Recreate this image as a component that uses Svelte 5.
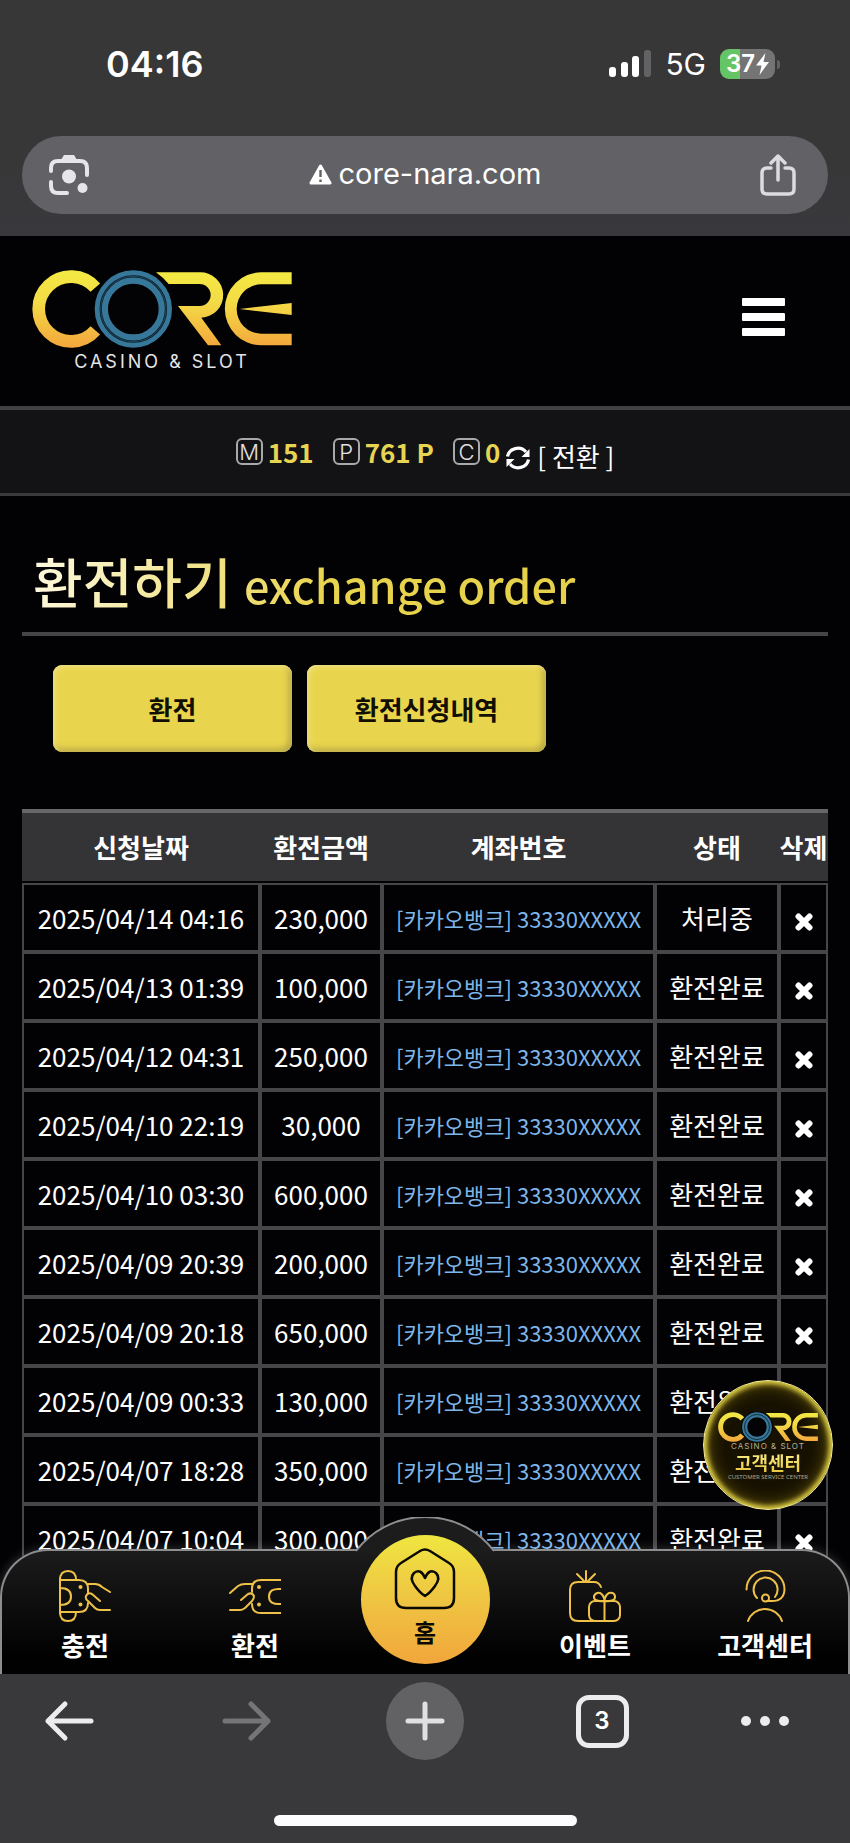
<script>
  const orders = [
    ['2025/04/14 04:16', '230,000', '처리중'],
    ['2025/04/13 01:39', '100,000', '환전완료'],
    ['2025/04/12 04:31', '250,000', '환전완료'],
    ['2025/04/10 22:19', '30,000', '환전완료'],
    ['2025/04/10 03:30', '600,000', '환전완료'],
    ['2025/04/09 20:39', '200,000', '환전완료'],
    ['2025/04/09 20:18', '650,000', '환전완료'],
    ['2025/04/09 00:33', '130,000', '환전완료'],
    ['2025/04/07 18:28', '350,000', '환전완료'],
    ['2025/04/07 10:04', '300,000', '환전완료']
  ];
  const account = '[카카오뱅크] 33330XXXXX';
</script>

{#snippet mark()}
  <svg class="mark" viewBox="97 104 780 234" aria-hidden="true">
    <defs>
      <linearGradient id="gold" gradientUnits="userSpaceOnUse" x1="0" y1="104" x2="0" y2="338">
        <stop offset="0" stop-color="#f3ea43" />
        <stop offset="0.4" stop-color="#f3dc46" />
        <stop offset="1" stop-color="#f3a63c" />
      </linearGradient>
    </defs>
    <path d="M287 157A97 97 0 1 0 287 285" fill="none" stroke="url(#gold)" stroke-width="38" />
    <path d="M469 111H600A68 68 0 0 1 605 247L665 330H625L535 212H600A33 33 0 0 0 600 146H507Q490 126 469 111Z" fill="url(#gold)" />
    <path d="M876 111H785A109 109 0 0 0 785 330H876V295H785A74 74 0 0 1 785 147H876Z" fill="url(#gold)" />
    <path d="M720 221L876 203V239Z" fill="url(#gold)" />
    <circle cx="401" cy="221" r="122" fill="#030204" />
    <circle cx="401" cy="221" r="96" fill="none" stroke="#37789a" stroke-width="40" />
    <circle cx="401" cy="221" r="98" fill="none" stroke="#0b1e29" stroke-width="7" />
    <circle cx="401" cy="221" r="98" fill="none" stroke="#2a5d78" stroke-width="2" />
  </svg>
{/snippet}

<div class="screen">
  <header class="chrome-top">
    <div class="status">
      <span class="clock">04:16</span>
      <div class="signals">
        <svg width="42" height="28" viewBox="0 0 42 28" aria-hidden="true">
          <rect x="0" y="17" width="7" height="10" rx="3" fill="#fff" />
          <rect x="12" y="12" width="7" height="15" rx="3" fill="#fff" />
          <rect x="23" y="6" width="7" height="21" rx="3" fill="#fff" />
          <rect x="35" y="0" width="7" height="27" rx="3" fill="#626264" />
        </svg>
        <span class="net">5G</span>
        <div class="battery">
          <span>37</span>
          <svg width="13" height="22" viewBox="0 0 13 22" aria-hidden="true"><path d="M9.500 0L0 12.500H5.500L3.500 22L13 9H7.500Z" fill="#fff" /></svg>
        </div>
      </div>
    </div>
    <div class="address">
      <button aria-label="Lens">
        <svg width="42" height="42" viewBox="0 0 42 42" fill="none" stroke="#e6e5ea" stroke-width="4" stroke-linecap="round">
          <path d="M3 17V14Q3 7 10 7H32Q39 7 39 14V21M3 28V32Q3 39 10 39H19" />
          <path d="M13 6L16 1H26L29 6Z" fill="#e6e5ea" stroke="none" />
          <circle cx="21" cy="22.500" r="7" fill="#e6e5ea" stroke="none" />
          <circle cx="34.500" cy="34" r="5" fill="#e6e5ea" stroke="none" />
        </svg>
      </button>
      <div class="url">
        <svg width="23" height="21" viewBox="0 0 23 21" aria-hidden="true"><path d="M11.500 2L21 19H2Z" fill="#fff" stroke="#fff" stroke-width="3" stroke-linejoin="round" /><path d="M11.500 6V13M11.500 15.500V18" stroke="#626166" stroke-width="2.400" /></svg>
        <span>core-nara.com</span>
      </div>
      <button aria-label="Share">
        <svg width="36" height="42" viewBox="0 0 36 42" fill="none" stroke="#dcdbe0" stroke-width="3.500" stroke-linecap="round" stroke-linejoin="round">
          <path d="M11 14H7Q2 14 2 19V35Q2 40 7 40H29Q34 40 34 35V19Q34 14 29 14H25M18 26V2M11 9L18 2L25 9" />
        </svg>
      </button>
    </div>
  </header>

  <div class="site">
    <div class="brand-bar">
      <a class="logo" href="#home" aria-label="CORE">
        {@render mark()}
        <span>CASINO &amp; SLOT</span>
      </a>
      <button class="menu" aria-label="메뉴"><i></i><i></i><i></i></button>
    </div>

    <div class="points">
      <span class="point"><b class="tag">M</b><strong>151</strong></span>
      <span class="point"><b class="tag">P</b><strong>761 P</strong></span>
      <span class="point"><b class="tag">C</b><strong>0</strong></span>
      <button class="convert">
        <svg width="24" height="28" viewBox="0 -4 24 28" aria-hidden="true">
          <path d="M1.500 10.500A10.500 10 0 0 1 20 6M22.500 13.500A10.500 10 0 0 1 4 18" fill="none" stroke="#fff" stroke-width="3.200" />
          <path d="M23.500 3V11H15.500ZM0.500 21V13H8.500Z" fill="#fff" />
        </svg>
        <span>[ 전환 ]</span>
      </button>
    </div>

    <main>
      <h1>환전하기 <small>exchange order</small></h1>
      <div class="tabs">
        <button>환전</button>
        <button>환전신청내역</button>
      </div>
      <table>
        <colgroup><col class="c-date" /><col class="c-sum" /><col class="c-acc" /><col class="c-state" /><col class="c-del" /></colgroup>
        <thead>
          <tr><th>신청날짜</th><th>환전금액</th><th>계좌번호</th><th>상태</th><th>삭제</th></tr>
        </thead>
        <tbody>
          {#each orders as [date, sum, state]}
            <tr>
              <td>{date}</td>
              <td>{sum}</td>
              <td class="account">{account}</td>
              <td>{state}</td>
              <td>
                <button class="del" aria-label="삭제">
                  <svg width="18" height="18" viewBox="0 0 18 18"><path d="M3.500 3.500L14.500 14.500M14.500 3.500L3.500 14.500" stroke="#fff" stroke-width="6" stroke-linecap="round" /></svg>
                </button>
              </td>
            </tr>
          {/each}
        </tbody>
      </table>
    </main>

    <a class="support" href="#support">
      {@render mark()}
      <span class="s1">CASINO &amp; SLOT</span>
      <span class="s2">고객센터</span>
      <span class="s3">CUSTOMER SERVICE CENTER</span>
    </a>

    <nav>
      <svg class="bump" width="140" height="36" viewBox="0 0 140 36" aria-hidden="true">
        <path d="M1 34A87 87 0 0 1 139 34V36H1Z" fill="#1c1c1d" />
        <path d="M1 34A87 87 0 0 1 139 34" fill="none" stroke="#8d8d8d" stroke-width="2" />
      </svg>
      <a href="#deposit">
        <svg class="ico" width="52" height="52" viewBox="0 0 52 52" aria-hidden="true">
          <path d="M1 8V44M1 10H20Q29 10 29 19V23M29 33Q29 42 20 42H1M1 10Q1 1 9 1Q17 1 17 10M1 42Q1 51 9 51Q17 51 17 42M1 18Q12 18 12 26.500Q12 35 1 35" />
          <path d="M29 14H36Q40 14 43 17L51 22M41 31L33 24Q29 22 27 26Q26 29 29 31L36 38Q38 40 41 40H51" />
          <circle class="dot" cx="21.500" cy="17" r="2" /><circle class="dot" cx="21.500" cy="34.500" r="2" />
        </svg>
        <span>충전</span>
      </a>
      <a href="#withdraw">
        <svg class="ico" width="52" height="52" viewBox="0 0 52 52" aria-hidden="true">
          <path d="M52 10H32Q23 10 23 19V22M23 34Q23 43 32 43H52M52 19Q40 18 40 26.500Q40 35 52 34" />
          <path d="M23 14H16Q12 14 9 16L1 23M12 30L19 24Q23 22 25 26Q25 29 23 31L16 38Q13 40 11 40H1" />
          <circle class="dot" cx="30" cy="17" r="2" /><circle class="dot" cx="30" cy="34.500" r="2" />
        </svg>
        <span>환전</span>
      </a>
      <a class="home" href="#home">
        <svg width="62" height="62" viewBox="0 0 62 62" fill="none" stroke="#0b0a02" stroke-width="2.500" stroke-linejoin="round" aria-hidden="true">
          <path d="M2 24Q2 18 7 15L26 3Q31 0 36 3L55 15Q60 18 60 24V50Q60 60 50 60H12Q2 60 2 50Z" />
          <path d="M31 48Q26 45 21 38Q15 30 20 25Q27 20 31 30Q35 20 42 25Q47 30 41 38Q36 45 31 48Z" />
        </svg>
        <span>홈</span>
      </a>
      <a href="#event">
        <svg class="ico" width="52" height="52" viewBox="0 0 52 52" aria-hidden="true">
          <path d="M25 51H9Q1 51 1 43V20Q1 12 9 12H25Q30 12 32 17" />
          <path d="M17 11V1M15 11L8 4M19 11L26 4" />
          <rect x="20" y="31" width="31" height="20" rx="6" />
          <path d="M35.500 31V51M35.500 31Q24 32 25 26Q27 22 31 23Q35 25 35.500 31Q36 25 40 23Q45 22 46 26Q47 32 35.500 31" />
        </svg>
        <span>이벤트</span>
      </a>
      <a href="#support">
        <svg class="ico" width="52" height="52" viewBox="0 0 52 52" aria-hidden="true">
          <path d="M7.500 19.500A19 19 0 0 1 45.500 19.500Q45 31 33 31H28" />
          <path d="M18 28A12 12 0 1 1 36 27" />
          <circle cx="26.500" cy="28" r="3.500" />
          <path d="M9 51A18 18 0 0 1 43 51" />
        </svg>
        <span>고객센터</span>
      </a>
    </nav>
  </div>

  <footer class="chrome-bottom">
    <div class="tools">
      <button aria-label="Back">
        <svg width="50" height="42" viewBox="0 0 50 42" fill="none" stroke="#ececee" stroke-width="5" stroke-linecap="round" stroke-linejoin="round"><path d="M47 21H4M21 4L4 21L21 38" /></svg>
      </button>
      <button aria-label="Forward">
        <svg width="50" height="42" viewBox="0 0 50 42" fill="none" stroke="#757477" stroke-width="5" stroke-linecap="round" stroke-linejoin="round"><path d="M3 21H46M29 4L46 21L29 38" /></svg>
      </button>
      <button class="add" aria-label="New tab">
        <svg width="42" height="42" viewBox="0 0 42 42" stroke="#e0e0e2" stroke-width="5" stroke-linecap="round"><path d="M21 4V38M4 21H38" /></svg>
      </button>
      <button class="count" aria-label="Tabs">3</button>
      <button aria-label="More">
        <svg width="50" height="12" viewBox="0 0 50 12" fill="#ececee"><circle cx="6" cy="6" r="5" /><circle cx="25" cy="6" r="5" /><circle cx="44" cy="6" r="5" /></svg>
      </button>
    </div>
    <div class="indicator"></div>
  </footer>
</div>

<style>
  :global(body) { background: #000; }
  .screen {
    display: flex;
    flex-direction: column;
    height: 100vh;
    overflow: hidden;
    background: #020103;
    color: #fff;
    font-family: "Noto Sans CJK KR", "Noto Sans", sans-serif;
    font-size: 26px;
    line-height: 38px;
  }
  * { box-sizing: border-box; }
  button {
    display: inline-flex;
    align-items: center;
    justify-content: center;
    padding: 0;
    border: 0;
    background: none;
    color: inherit;
    font: inherit;
  }
  a { color: inherit; text-decoration: none; }
  svg { display: block; flex: none; }

  .chrome-top {
    flex: none;
    padding: 0 22px 22px;
    background: linear-gradient(#373737, #373737 60%, #39383c);
    font-family: Inter, sans-serif;
  }
  .status {
    display: flex;
    align-items: center;
    justify-content: space-between;
    height: 136px;
    padding: 0 48px 8px 84px;
  }
  .clock { font-size: 36px; font-weight: 600; }
  .signals { display: flex; align-items: center; gap: 14px; }
  .net { font-size: 30px; }
  .battery {
    position: relative;
    display: flex;
    align-items: center;
    justify-content: center;
    gap: 1px;
    width: 55px;
    height: 30px;
    margin-right: 5px;
    border-radius: 9px;
    background: linear-gradient(90deg, #65c466 37%, #747475 37%);
    font-size: 24px;
    font-weight: 600;
  }
  .battery::after {
    content: "";
    position: absolute;
    right: -5px;
    width: 3px;
    height: 9px;
    border-radius: 0 3px 3px 0;
    background: #626264;
  }
  .address {
    display: flex;
    align-items: center;
    justify-content: space-between;
    height: 78px;
    padding: 0 32px 0 26px;
    border-radius: 39px;
    background: #626166;
  }
  .url { display: flex; align-items: center; gap: 7px; padding-bottom: 2px; font-size: 29px; }

  .site {
    position: relative;
    flex: 1;
    min-height: 0;
    overflow: hidden;
    background: #020103;
  }
  .brand-bar {
    display: flex;
    align-items: center;
    justify-content: space-between;
    height: 170px;
    padding: 0 65px 8px 32px;
  }
  .logo {
    display: flex;
    flex-direction: column;
    align-items: center;
    gap: 3px;
    width: 260px;
    padding-top: 8px;
  }
  .mark { width: 100%; }
  .logo span {
    font-family: Inter, sans-serif;
    font-size: 18px;
    line-height: 22px;
    letter-spacing: 3px;
    color: #e4e4e6;
  }
  .menu { flex-direction: column; gap: 7px; width: 43px; }
  .menu i { width: 43px; height: 8px; border-radius: 1px; background: #fff; }

  .points {
    display: flex;
    align-items: center;
    justify-content: center;
    height: 90px;
    border-top: 4px solid #414144;
    border-bottom: 3px solid #3a3a3d;
    background: #131316;
  }
  .point {
    display: flex;
    align-items: center;
    gap: 5px;
    margin-right: 19px;
  }
  .point:nth-of-type(3) { margin-right: 6px; }
  .point strong { color: #e8d453; }
  .tag {
    display: flex;
    align-items: center;
    justify-content: center;
    width: 27px;
    height: 27px;
    border: 2px solid #a9a9ab;
    border-radius: 6px;
    color: #e2e2e4;
    font: 300 22px Inter, sans-serif;
  }
  .convert { gap: 7px; padding-top: 8px; }

  main { padding: 45px 22px 0; }
  h1 {
    margin: 0;
    padding: 0 11px 11px;
    border-bottom: 4px solid #454446;
    background: linear-gradient(100deg, #fffbe6, #f2e48c 22%, #e8d44e 38%, #e5cd49) text;
    color: transparent;
    font-size: 54px;
    font-weight: 500;
    line-height: 80px;
  }
  h1 small { font-size: 45px; line-height: 1; }
  .tabs { display: flex; gap: 15px; padding: 29px 31px 57px; }
  .tabs button {
    width: 239px;
    height: 87px;
    border-radius: 9px;
    background: #e9d54d;
    box-shadow: inset 2px 2px 5px #f0e287, inset -3px -3px 6px #b3a443;
    color: #110e02;
    font-weight: 700;
  }
  table {
    width: 100%;
    table-layout: fixed;
    border-collapse: separate;
    border-spacing: 0;
    border-top: 4px solid #666667;
    text-align: center;
    white-space: nowrap;
  }
  .c-date { width: 238px; }
  .c-sum { width: 122px; }
  .c-acc { width: 273px; }
  .c-state { width: 124px; }
  .c-del { width: 49px; }
  th { height: 70px; padding: 0; border-bottom: 2px solid #020103; background: #343336; font-weight: 700; background-clip: padding-box; }
  td { height: 69px; padding: 0; border: 2px solid #464548; }
  .account { color: #7db6ea; font-size: 22px; }
  td:last-child { padding-top: 8px; }
  .del { display: flex; width: 100%; }

  .support {
    position: absolute;
    right: 17px;
    bottom: 164px;
    display: flex;
    flex-direction: column;
    align-items: center;
    width: 130px;
    height: 130px;
    padding: 31px 14px 0;
    border: 1px solid #f6ee9c;
    border-radius: 50%;
    background: #171102;
    box-shadow: inset 0 0 5px 3px #e0d146, inset 0 0 18px 3px #6d5d0b;
    line-height: 1;
  }
  .s1 { font: 8px/9px Inter, sans-serif; letter-spacing: 1px; color: #b5b19b; }
  .s2 {
    background: linear-gradient(#faf18a, #e9c63f) text;
    color: transparent;
    font-size: 18px;
    font-weight: 700;
    line-height: 22px;
  }
  .s3 { font: 6px/8px "Noto Sans", sans-serif; white-space: nowrap; color: #aaa795; }

  nav {
    position: absolute;
    inset: auto 0 0;
    display: grid;
    grid-template-columns: repeat(5, 1fr);
    height: 125px;
    border-radius: 48px 48px 0 0;
    background: linear-gradient(#1c1c1d, #010101 85%);
    box-shadow: 0 0 12px rgb(255 255 255 / 20%);
    font-weight: 700;
  }
  nav::before {
    content: "";
    position: absolute;
    inset: 0;
    border: 2px solid #8d8d8d;
    border-bottom: 0;
    border-radius: inherit;
    pointer-events: none;
  }
  nav a {
    display: flex;
    flex-direction: column;
    align-items: center;
    gap: 4px;
    padding-top: 21px;
  }
  .ico { fill: none; stroke: #efc148; stroke-width: 2; stroke-linecap: round; stroke-linejoin: round; }
  .dot { fill: #efc148; stroke: none; }
  .bump { position: absolute; top: -32px; left: calc(50% - 70px); }
  nav .home {
    position: relative;
    justify-self: center;
    width: 129px;
    height: 129px;
    margin-top: -14px;
    padding-top: 13px;
    gap: 3px;
    border-radius: 50%;
    background: linear-gradient(#efe640, #efc843 45%, #f1a63b);
    color: #0b0a02;
    font-size: 24px;
  }

  .chrome-bottom {
    flex: none;
    height: 169px;
    padding-top: 8px;
    background: #39383b;
    font-family: Inter, sans-serif;
  }
  .tools {
    display: grid;
    grid-template-columns: 138fr 218fr 138fr 216fr 110fr;
    align-items: center;
    justify-items: center;
    height: 78px;
    padding-right: 30px;
  }
  .add { width: 78px; height: 78px; border-radius: 50%; background: #626265; }
  .count {
    width: 53px;
    height: 53px;
    border: 5px solid #ececee;
    border-radius: 13px;
    font-size: 24px;
    font-weight: 600;
  }
  .indicator { width: 303px; height: 11px; margin: 55px auto 0; border-radius: 6px; background: #fdfcff; }
</style>
